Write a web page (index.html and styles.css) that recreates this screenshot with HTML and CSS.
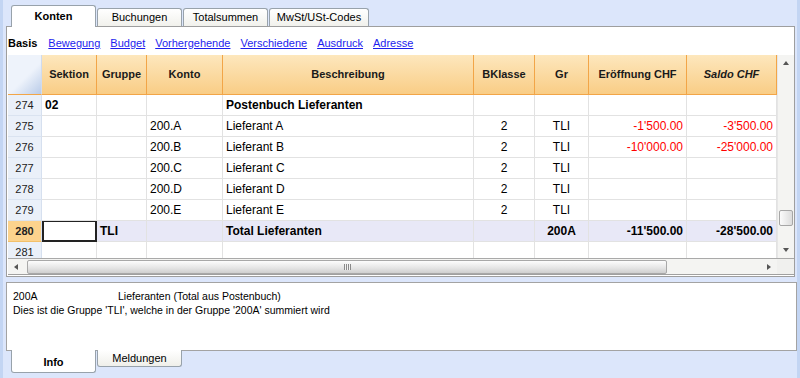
FILE: index.html
```html
<!DOCTYPE html>
<html lang="de">
<head>
    <meta charset="utf-8">
    <title>Konten</title>
    <link rel="stylesheet" href="styles.css">
</head>
<body>
    <div class="tabs top-tabs">
        <div class="tab active">Konten</div>
        <div class="tab">Buchungen</div>
        <div class="tab">Totalsummen</div>
        <div class="tab wide">MwSt/USt-Codes</div>
    </div>

    <div class="sheet">
        <div class="views">
            <b>Basis</b>
            <a href="#">Bewegung</a>
            <a href="#">Budget</a>
            <a href="#">Vorhergehende</a>
            <a href="#">Verschiedene</a>
            <a href="#">Ausdruck</a>
            <a href="#">Adresse</a>
        </div>

        <div class="grid-box">
            <div class="grid-main">
                <div class="grid">
                    <div class="row head">
                        <div class="num"></div>
                        <div>Sektion</div>
                        <div>Gruppe</div>
                        <div>Konto</div>
                        <div>Beschreibung</div>
                        <div>BKlasse</div>
                        <div>Gr</div>
                        <div>Eröffnung CHF</div>
                        <div class="italic">Saldo CHF</div>
                    </div>
                    <div class="row bold">
                        <div class="num">274</div>
                        <div>02</div>
                        <div></div>
                        <div></div>
                        <div>Postenbuch Lieferanten</div>
                        <div></div>
                        <div></div>
                        <div></div>
                        <div></div>
                    </div>
                    <div class="row">
                        <div class="num">275</div>
                        <div></div>
                        <div></div>
                        <div>200.A</div>
                        <div>Lieferant A</div>
                        <div class="center">2</div>
                        <div class="center">TLI</div>
                        <div class="amount red">-1'500.00</div>
                        <div class="amount red">-3'500.00</div>
                    </div>
                    <div class="row">
                        <div class="num">276</div>
                        <div></div>
                        <div></div>
                        <div>200.B</div>
                        <div>Lieferant B</div>
                        <div class="center">2</div>
                        <div class="center">TLI</div>
                        <div class="amount red">-10'000.00</div>
                        <div class="amount red">-25'000.00</div>
                    </div>
                    <div class="row">
                        <div class="num">277</div>
                        <div></div>
                        <div></div>
                        <div>200.C</div>
                        <div>Lieferant C</div>
                        <div class="center">2</div>
                        <div class="center">TLI</div>
                        <div></div>
                        <div></div>
                    </div>
                    <div class="row">
                        <div class="num">278</div>
                        <div></div>
                        <div></div>
                        <div>200.D</div>
                        <div>Lieferant D</div>
                        <div class="center">2</div>
                        <div class="center">TLI</div>
                        <div></div>
                        <div></div>
                    </div>
                    <div class="row">
                        <div class="num">279</div>
                        <div></div>
                        <div></div>
                        <div>200.E</div>
                        <div>Lieferant E</div>
                        <div class="center">2</div>
                        <div class="center">TLI</div>
                        <div></div>
                        <div></div>
                    </div>
                    <div class="row bold total">
                        <div class="num current">280</div>
                        <div class="selected"></div>
                        <div>TLI</div>
                        <div></div>
                        <div>Total Lieferanten</div>
                        <div></div>
                        <div class="center">200A</div>
                        <div class="amount">-11'500.00</div>
                        <div class="amount">-28'500.00</div>
                    </div>
                    <div class="row">
                        <div class="num">281</div>
                        <div></div>
                        <div></div>
                        <div></div>
                        <div></div>
                        <div></div>
                        <div></div>
                        <div></div>
                        <div></div>
                    </div>
                </div>
                <div class="vscroll">
                    <div class="arrow up"></div>
                    <div class="vtrack"><div class="vthumb"></div></div>
                    <div class="arrow down"></div>
                </div>
            </div>
            <div class="hscroll-row">
                <div class="hscroll">
                    <div class="arrow left"></div>
                    <div class="hthumb"><span class="grip"></span></div>
                    <div class="arrow right"></div>
                </div>
                <div class="corner"></div>
            </div>
        </div>
    </div>

    <div class="info">
        <div class="info-line"><span class="info-code">200A</span>Lieferanten (Total aus Postenbuch)</div>
        <div class="info-line">Dies ist die Gruppe 'TLI', welche in der Gruppe '200A' summiert wird</div>
    </div>

    <div class="tabs bottom-tabs">
        <div class="tab active">Info</div>
        <div class="tab">Meldungen</div>
    </div>
</body>
</html>
```

FILE: styles.css
```css
* {
    margin: 0;
    padding: 0;
    box-sizing: border-box;
}
body {
    width: 800px;
    height: 378px;
    overflow: hidden;
    background: #dce6fb;
    border-left: 3px solid #c3d5f3;
    border-right: 3px solid #c3d5f3;
    padding-left: 3px;
    font-family: 'Liberation Sans', Arial, sans-serif;
    font-size: 11px;
    color: #000;
}

/* tabs */
.tabs {
    display: flex;
    padding-left: 5px;
}
.top-tabs {
    height: 21px;
    margin-top: 5px;
    align-items: flex-end;
    position: relative;
    z-index: 1;
}
.top-tabs .tab {
    width: 85px;
    height: 18px;
    margin-right: 1px;
    border: 1px solid #98a2ab;
    border-bottom: none;
    border-radius: 3px 3px 0 0;
    background: linear-gradient(#ffffff, #f1f1ec);
    text-align: center;
    line-height: 17px;
}
.top-tabs .tab.active {
    height: 22px;
    margin-bottom: -1px;
    background: #fff;
    font-weight: bold;
    line-height: 20px;
}
.top-tabs .tab.wide {
    width: 100px;
}
.bottom-tabs {
    align-items: flex-start;
    margin-top: -1px;
}
.bottom-tabs .tab {
    width: 85px;
    height: 17px;
    margin-right: 1px;
    border: 1px solid #98a2ab;
    border-top: none;
    border-radius: 0 0 3px 3px;
    background: linear-gradient(#ffffff, #efefea);
    text-align: center;
    line-height: 16px;
}
.bottom-tabs .tab.active {
    height: 23px;
    background: #fff;
    font-weight: bold;
    line-height: 24px;
    position: relative;
}

/* main sheet */
.sheet {
    width: 789px;
    height: 251px;
    background: #fff;
    border: 1px solid #9e9e9e;
    padding: 0 0 2px 1px;
}
.views {
    height: 28px;
    display: flex;
    align-items: center;
    padding-top: 4px;
    font-size: 11px;
}
.views b {
    margin-right: 11px;
}
.views a {
    color: #1d1dee;
    margin-right: 10px;
}

.grid-box {
    border-bottom: 1px solid #a0a0a0;
}
.grid-main {
    display: flex;
    height: 203px;
}
.grid {
    width: 769px;
    overflow: hidden;
    font-size: 12px;
}
.row {
    display: grid;
    grid-template-columns: 34px 55px 50px 76px 251px 61px 54px 98px 90px;
    height: 21px;
}
.row > div {
    border-right: 1px solid #e2e2e2;
    border-bottom: 1px solid #e2e2e2;
    padding: 0 3px;
    line-height: 20px;
    white-space: nowrap;
    overflow: hidden;
}
.row > .num {
    background: #eaf0f9;
    border-right: 1px solid #d6e0ef;
    border-bottom: 1px solid #dae3f0;
    text-align: center;
    font-size: 11px;
    color: #222;
}
.row.head {
    height: 40px;
}
.row.head > div {
    background: linear-gradient(#fde7bd, #f9cd86);
    border-right: 1px solid #f2a547;
    border-bottom: 1px solid #f2a547;
    text-align: center;
    font-size: 11px;
    font-weight: bold;
    line-height: 39px;
    color: #1a1a1a;
}
.row.head > .num {
    background: linear-gradient(135deg, #eef3fb 55%, #b9cbe8);
    border-right: 1px solid #d0dbee;
    border-bottom: 1px solid #f2a547;
}
.row.head > .italic {
    font-style: italic;
}
.row.bold > div {
    font-weight: bold;
}
.row.bold > .num {
    font-weight: normal;
}
.row.total > div {
    background: #e8e8f7;
}
.row.total > .num.current {
    background: #fcd38d;
    font-weight: bold;
    border-bottom-color: #f2c06a;
}
.row.total > .selected {
    background: #fff;
    border: 2px solid #222;
    border-top-width: 1px;
}
.center {
    text-align: center;
}
.amount {
    text-align: right;
}
.red {
    color: #f00;
}

/* scrollbars */
.vscroll {
    width: 17px;
    display: flex;
    flex-direction: column;
    background: #f4f4f2;
    border-left: 1px solid #e6e6e6;
}
.vtrack {
    flex: 1;
    position: relative;
}
.vthumb {
    position: absolute;
    left: 1px;
    right: 1px;
    top: 139px;
    height: 16px;
    border: 1px solid #a6a6a6;
    border-radius: 2px;
    background: linear-gradient(90deg, #fbfbfb, #dcdcdc);
}
.arrow {
    width: 16px;
    height: 16px;
    display: flex;
    align-items: center;
    justify-content: center;
}
.arrow::after {
    content: "";
    border: 4px solid transparent;
}
.arrow.up::after {
    border-top: none;
    border-bottom: 4px solid #555;
    border-left-width: 3px;
    border-right-width: 3px;
}
.arrow.down::after {
    border-bottom: none;
    border-top: 4px solid #555;
    border-left-width: 3px;
    border-right-width: 3px;
}
.arrow.left::after {
    border-left: none;
    border-right: 4px solid #555;
    border-top-width: 3px;
    border-bottom-width: 3px;
}
.arrow.right::after {
    border-right: none;
    border-left: 4px solid #555;
    border-top-width: 3px;
    border-bottom-width: 3px;
}
.hscroll-row {
    display: flex;
    height: 16px;
    border-top: 1px solid #a9a9a9;
}
.hscroll {
    width: 769px;
    display: flex;
    align-items: center;
    background: #f4f4f2;
}
.hscroll .arrow {
    height: 15px;
}
.hthumb {
    width: 640px;
    height: 14px;
    margin-left: 3px;
    margin-right: auto;
    border: 1px solid #a8a8a8;
    border-radius: 2px;
    background: linear-gradient(#fdfdfd, #e4e4e4 60%, #cfcfcf);
    display: flex;
    align-items: center;
    justify-content: center;
}
.grip {
    width: 7px;
    height: 6px;
    background: repeating-linear-gradient(90deg, #8a8a8a 0 1px, #f2f2f2 1px 2px);
}
.corner {
    width: 17px;
    background: #f0f0ee;
}

/* info pane */
.info {
    width: 791px;
    height: 69px;
    margin-top: 5px;
    background: #fff;
    border: 1px solid #a3a3a3;
    padding: 6px 6px;
    font-size: 10.5px;
    line-height: 14px;
}
.info-code {
    display: inline-block;
    width: 105px;
}
```
